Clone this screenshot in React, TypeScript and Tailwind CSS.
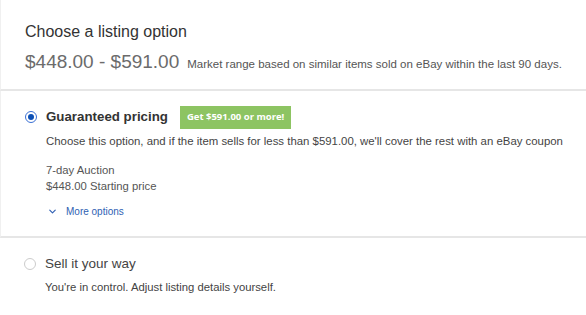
import { ChevronDown } from "lucide-react"

export default function App() {
  return (
    <div className="w-[586px] h-[315px] bg-white overflow-hidden font-['Liberation_Sans',Arial,sans-serif]">

      {/* header */}
      <div className="pl-[24px] pt-[22px] pb-[15px] border-b-2 border-[#e6e6e6] border-l border-l-[#f0f0f0]">
        <div className="text-[16px] leading-[20px] text-[#333]">
          Choose a listing option
        </div>
        <div className="mt-[8px] flex items-baseline h-[24px]">
          <span className="text-[19px] leading-[24px] text-[#6b6b6b]">
            $448.00 - $591.00
          </span>
          <span className="ml-[8px] text-[11.5px] text-[#555]">
            Market range based on similar items sold on eBay within the last 90 days.
          </span>
        </div>
      </div>

      {/* guaranteed */}
      <div className="pl-[24px] pt-[14px] pb-[18px] border-b-2 border-[#e6e6e6] border-l border-l-[#f0f0f0]">
        <div className="flex items-center h-[24px]">
          <div className="w-[12px] h-[12px] rounded-full border-[1.5px] border-[#3a70d4] flex items-center justify-center">
            <div className="w-[6px] h-[6px] rounded-full bg-[#0b4fb5]" />
          </div>
          <span className="ml-[9px] text-[13.3px] font-bold text-[#333]">
            Guaranteed pricing
          </span>
          <span className="ml-[12px] h-[23px] px-[7px] flex items-center bg-[#8dc462] text-white text-[9.5px] font-bold font-['Open_Sans',sans-serif]">
            Get $591.00 or more!
          </span>
        </div>

        <div className="ml-[21px]">
          <div className="mt-[4px] text-[11.4px] leading-[16px] text-[#444]">
            Choose this option, and if the item sells for less than $591.00, we'll cover the rest with an eBay coupon
          </div>
          <div className="mt-[13px] text-[11.3px] leading-[16px] text-[#555]">
            <div>7-day Auction</div>
            <div>$448.00 Starting price</div>
          </div>
          <div className="mt-[10px] flex items-center h-[14px] text-[10px] text-[#2f5fb3]">
            <ChevronDown size={11} strokeWidth={2.5} className="ml-[1px]" />
            <span className="ml-[8px]">More options</span>
          </div>
        </div>
      </div>

      {/* sell your way */}
      <div className="pl-[24px] pt-[16px]">
        <div className="flex items-center h-[20px]">
          <div className="w-[12px] h-[12px] rounded-full border border-[#ccc]" />
          <span className="ml-[9px] text-[13.5px] text-[#444]">
            Sell it your way
          </span>
        </div>
        <div className="ml-[21px] mt-[5px] text-[11.3px] leading-[16px] text-[#444]">
          You're in control. Adjust listing details yourself.
        </div>
      </div>

    </div>
  )
}
